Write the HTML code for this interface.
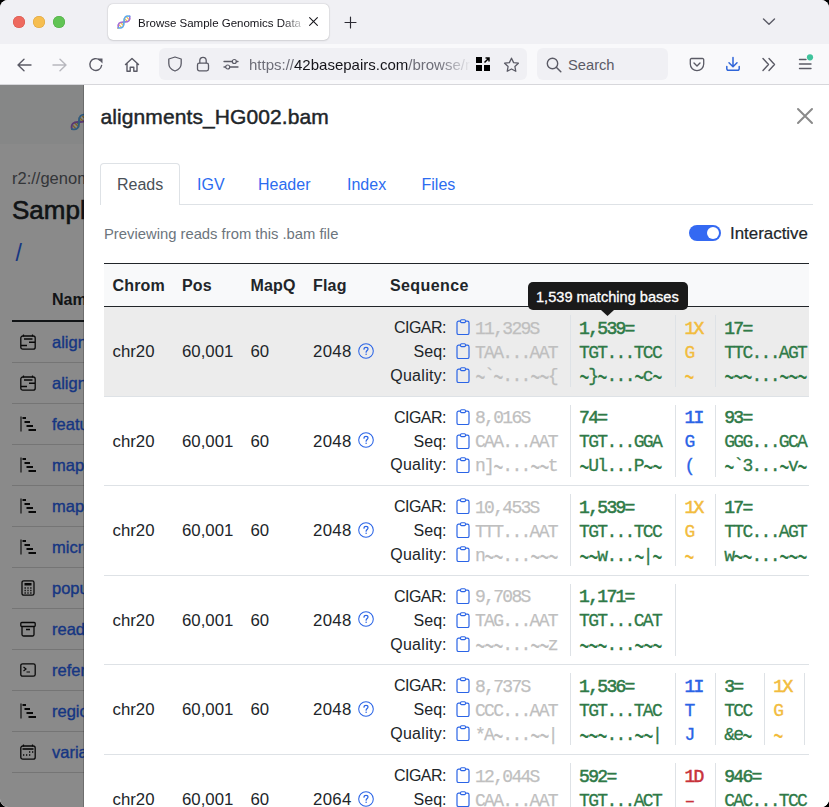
<!DOCTYPE html>
<html><head><meta charset="utf-8">
<style>
*{margin:0;padding:0;box-sizing:border-box}
html,body{width:829px;height:807px;overflow:hidden;background:#000}
body{position:relative;font-family:"Liberation Sans",sans-serif}
#win{position:absolute;left:0;top:0;width:829px;height:807px;border-radius:8px;overflow:hidden;background:#fff}
.abs{position:absolute}
.t{position:absolute;white-space:nowrap}
svg{position:absolute;overflow:visible}
</style></head>
<body><div id="win">

<div class="abs" style="left:0;top:0;width:829px;height:44px;background:#f0f0f4"></div>
<div class="abs" style="left:13px;top:16px;width:12px;height:12px;border-radius:50%;background:#ee6a5f;box-shadow:inset 0 0 0 0.5px #d6544a"></div>
<div class="abs" style="left:33px;top:16px;width:12px;height:12px;border-radius:50%;background:#f6be50;box-shadow:inset 0 0 0 0.5px #dba23c"></div>
<div class="abs" style="left:53px;top:16px;width:12px;height:12px;border-radius:50%;background:#61c454;box-shadow:inset 0 0 0 0.5px #4ea943"></div>
<div class="abs" style="left:108px;top:4px;width:221px;height:36px;background:#fff;border-radius:5px;box-shadow:0 0 1.5px rgba(0,0,0,.28),0 1px 2px rgba(0,0,0,.08)"></div>
<svg style="left:116px;top:14px" width="16" height="16" viewBox="0 0 16 16"><g transform="rotate(-45 8 8)">
<path d="M-1.5 8 L1 8M2.5 6.2V9.8M5 5.3V10.7M10.8 5.3V10.7M13.3 6.2V9.8" stroke="#e8b84a" stroke-width="1.1"/>
<path d="M6.5 6.8V9.2M9.2 6.8V9.2" stroke="#8fc46a" stroke-width="1.1"/>
<path d="M0 8C2 4.5 5 4.5 8 8S14 11.5 16 8" stroke="#a46ad6" stroke-width="1.6" fill="none" stroke-linecap="round"/>
<path d="M0 8C2 11.5 5 11.5 8 8S14 4.5 16 8" stroke="#5ca8e8" stroke-width="1.6" fill="none" stroke-linecap="round"/>
</g></svg>
<div class="t" style="left:138px;top:16px;font-size:11.5px;line-height:14px;color:#15141a;width:170px;overflow:hidden;-webkit-mask-image:linear-gradient(to right,#000 145px,transparent 168px)">Browse Sample Genomics Data - 42basepairs</div>
<svg style="left:308.5px;top:17.3px" width="9" height="9" viewBox="0 0 9 9"><path d="M0.6 0.6L8.4 8.4M8.4 0.6L0.6 8.4" stroke="#15141a" stroke-width="1.05" stroke-linecap="round"/></svg>
<svg style="left:344px;top:16px" width="13" height="13" viewBox="0 0 13 13"><path d="M6.5 1V12M1 6.5H12" stroke="#2b2a33" stroke-width="1.15" stroke-linecap="round"/></svg>
<svg style="left:762px;top:17px" width="14" height="9" viewBox="0 0 14 9"><path d="M1.5 2L7 7.3L12.5 2" stroke="#5b5b66" stroke-width="1.4" fill="none" stroke-linecap="round" stroke-linejoin="round"/></svg>
<div class="abs" style="left:0;top:0;width:0;height:0"></div>
<div class="abs" style="left:0;top:44px;width:829px;height:40px;background:#f9f9fb"></div>
<div class="abs" style="left:0;top:84px;width:829px;height:1px;background:#d7d7db"></div>
<svg style="left:16px;top:57px" width="16" height="16" viewBox="0 0 16 16"><path d="M15 8H2.5M8 2.2L2 8L8 13.8" stroke="#5b5b66" stroke-width="1.4" fill="none" stroke-linecap="round" stroke-linejoin="round"/></svg>
<svg style="left:52px;top:57px" width="16" height="16" viewBox="0 0 16 16"><path d="M1 8H13.5M8 2.2L14 8L8 13.8" stroke="#b8b8be" stroke-width="1.4" fill="none" stroke-linecap="round" stroke-linejoin="round"/></svg>
<svg style="left:88px;top:57px" width="16" height="16" viewBox="0 0 16 16"><path d="M13.6 8.5A5.9 5.9 0 1 1 11.5 3" stroke="#5b5b66" stroke-width="1.4" fill="none" stroke-linecap="round"/><path d="M9.5 1.5L14.5 1.5L14.5 6.5Z" fill="#5b5b66"/></svg>
<svg style="left:124px;top:57px" width="16" height="16" viewBox="0 0 16 16"><path d="M1.5 7.5L8 1.5L14.5 7.5M3 6.5V14.2H6.2V10.2H9.8V14.2H13V6.5" stroke="#5b5b66" stroke-width="1.4" fill="none" stroke-linecap="round" stroke-linejoin="round"/></svg>
<div class="abs" style="left:159px;top:48px;width:368px;height:32px;background:#f0f0f4;border-radius:6px"></div>
<svg style="left:167px;top:56px" width="16" height="16" viewBox="0 0 16 16"><path d="M8 1L14.2 3V7.5C14.2 11 11.5 13.8 8 15C4.5 13.8 1.8 11 1.8 7.5V3Z" stroke="#5b5b66" stroke-width="1.3" fill="none" stroke-linejoin="round"/></svg>
<svg style="left:195px;top:56px" width="16" height="16" viewBox="0 0 16 16"><rect x="2.5" y="7.2" width="11" height="7.6" rx="1.8" stroke="#5b5b66" stroke-width="1.3" fill="none"/><path d="M4.8 7.2V4.5A3.2 3.2 0 0 1 11.2 4.5V7.2" stroke="#5b5b66" stroke-width="1.3" fill="none"/></svg>
<svg style="left:223px;top:56px" width="16" height="16" viewBox="0 0 16 16"><path d="M1 5.5H9M13.5 5.5H15M1 11H2.5M7 11H15" stroke="#5b5b66" stroke-width="1.3" fill="none" stroke-linecap="round"/><circle cx="11.3" cy="5.5" r="2" stroke="#5b5b66" stroke-width="1.2" fill="none"/><circle cx="4.7" cy="11" r="2" stroke="#5b5b66" stroke-width="1.2" fill="none"/></svg>
<div class="t" style="left:249px;top:56px;font-size:15px;line-height:18px;width:224px;overflow:hidden;-webkit-mask-image:linear-gradient(to right,#000 190px,transparent 222px)"><span style="color:#6e6e78">https://</span><span style="color:#15141a">42basepairs.com</span><span style="color:#6e6e78">/browse/r2://genomics</span></div>
<svg style="left:476px;top:57px" width="14" height="14" viewBox="0 0 14 14"><rect x="0" y="0" width="6" height="6" fill="#000"/><rect x="0" y="8" width="6" height="6" fill="#000"/><rect x="8" y="8" width="6" height="6" fill="#000"/><path d="M8.5 5.5L13 1M9.5 1H13V4.5" stroke="#000" stroke-width="1.5" fill="none"/></svg>
<svg style="left:503px;top:57px" width="17" height="16" viewBox="0 0 17 16"><path d="M8.5 1.2L10.6 5.6L15.4 6.2L11.9 9.5L12.8 14.3L8.5 12L4.2 14.3L5.1 9.5L1.6 6.2L6.4 5.6Z" stroke="#5b5b66" stroke-width="1.3" fill="none" stroke-linejoin="round"/></svg>
<div class="abs" style="left:537px;top:48px;width:131px;height:32px;background:#f0f0f4;border-radius:6px"></div>
<svg style="left:546px;top:57px" width="16" height="16" viewBox="0 0 16 16"><circle cx="6.5" cy="6.5" r="5.2" stroke="#5b5b66" stroke-width="1.4" fill="none"/><path d="M10.3 10.3L14.8 14.8" stroke="#5b5b66" stroke-width="1.5" stroke-linecap="round"/></svg>
<div class="t" style="left:568px;top:56px;font-size:14.7px;line-height:18px;color:#5b5b66">Search</div>
<svg style="left:689px;top:57px" width="16" height="15" viewBox="0 0 16 15"><path d="M2.5 1.5H13.5A1.2 1.2 0 0 1 14.7 2.7V7A6.7 6.7 0 0 1 1.3 7V2.7A1.2 1.2 0 0 1 2.5 1.5Z" stroke="#5b5b66" stroke-width="1.3" fill="none"/><path d="M5 6L8 9L11 6" stroke="#5b5b66" stroke-width="1.4" fill="none" stroke-linecap="round" stroke-linejoin="round"/></svg>
<svg style="left:725px;top:56px" width="16" height="16" viewBox="0 0 16 16"><path d="M8 1.5V10.5M4 6.8L8 10.8L12 6.8" stroke="#2f65d9" stroke-width="1.5" fill="none" stroke-linecap="round" stroke-linejoin="round"/><path d="M1.8 10.5V12.8A1.5 1.5 0 0 0 3.3 14.3H12.7A1.5 1.5 0 0 0 14.2 12.8V10.5" stroke="#2f65d9" stroke-width="1.5" fill="none" stroke-linecap="round"/></svg>
<svg style="left:761px;top:57px" width="16" height="15" viewBox="0 0 16 15"><path d="M2 1.5L7.5 7.5L2 13.5M8 1.5L13.5 7.5L8 13.5" stroke="#5b5b66" stroke-width="1.4" fill="none" stroke-linecap="round" stroke-linejoin="round"/></svg>
<svg style="left:798px;top:56px" width="16" height="16" viewBox="0 0 16 16"><path d="M1.5 3.5H8M1.5 8H13M1.5 12.5H13" stroke="#5b5b66" stroke-width="1.4" fill="none" stroke-linecap="round"/><circle cx="12" cy="1.3" r="3.1" fill="#3fc39c"/></svg>
<div class="abs" style="left:0;top:85px;width:84px;height:722px;background:#fff;overflow:hidden">
<div class="abs" style="left:0;top:0;width:84px;height:59px;background:#f8f9fa"></div>
<svg style="left:69px;top:27px" width="20" height="20" viewBox="0 0 16 16"><g transform="rotate(-45 8 8)">
<path d="M2.5 6.2V9.8M5 5.3V10.7M10.8 5.3V10.7M13.3 6.2V9.8" stroke="#e8b84a" stroke-width="1.1"/>
<path d="M6.5 6.8V9.2M9.2 6.8V9.2" stroke="#8fc46a" stroke-width="1.1"/>
<path d="M0 8C2 4.5 5 4.5 8 8S14 11.5 16 8" stroke="#a46ad6" stroke-width="1.5" fill="none" stroke-linecap="round"/>
<path d="M0 8C2 11.5 5 11.5 8 8S14 4.5 16 8" stroke="#5ca8e8" stroke-width="1.5" fill="none" stroke-linecap="round"/>
</g></svg>
</div>
<div class="t" style="left:12px;top:166.48px;font-size:16.5px;line-height:25px;color:#5f646a;font-weight:normal;font-family:'Liberation Sans',sans-serif;">r2://genomics</div>
<div class="t" style="left:12px;top:191.49px;font-size:26px;line-height:39px;color:#212529;font-weight:normal;font-family:'Liberation Sans',sans-serif;-webkit-text-stroke:0.6px #212529">Sample</div>
<div class="t" style="left:15.5px;top:235.53px;font-size:23px;line-height:34px;color:#2a64f0;font-weight:normal;font-family:'Liberation Sans',sans-serif;">/</div>
<div class="t" style="left:52px;top:288.46px;font-size:16px;line-height:24px;color:#212529;font-weight:bold;font-family:'Liberation Sans',sans-serif;">Name</div>
<div class="abs" style="left:12px;top:320px;width:72px;height:2px;background:#212529"></div>
<div class="t" style="left:52px;top:330.28px;font-size:16.5px;line-height:25px;color:#2a64f0;font-weight:normal;font-family:'Liberation Sans',sans-serif;-webkit-text-stroke:0.35px #2a64f0">alignments</div>
<div class="abs" style="left:12px;top:362.4px;width:72px;height:1px;background:#d9d9d9"></div>
<div class="t" style="left:52px;top:371.28px;font-size:16.5px;line-height:25px;color:#2a64f0;font-weight:normal;font-family:'Liberation Sans',sans-serif;-webkit-text-stroke:0.35px #2a64f0">alignments</div>
<div class="abs" style="left:12px;top:403.4px;width:72px;height:1px;background:#d9d9d9"></div>
<div class="t" style="left:52px;top:412.28px;font-size:16.5px;line-height:25px;color:#2a64f0;font-weight:normal;font-family:'Liberation Sans',sans-serif;-webkit-text-stroke:0.35px #2a64f0">features</div>
<div class="abs" style="left:12px;top:444.4px;width:72px;height:1px;background:#d9d9d9"></div>
<div class="t" style="left:52px;top:453.28px;font-size:16.5px;line-height:25px;color:#2a64f0;font-weight:normal;font-family:'Liberation Sans',sans-serif;-webkit-text-stroke:0.35px #2a64f0">mappability</div>
<div class="abs" style="left:12px;top:485.4px;width:72px;height:1px;background:#d9d9d9"></div>
<div class="t" style="left:52px;top:494.28px;font-size:16.5px;line-height:25px;color:#2a64f0;font-weight:normal;font-family:'Liberation Sans',sans-serif;-webkit-text-stroke:0.35px #2a64f0">mappability</div>
<div class="abs" style="left:12px;top:526.4px;width:72px;height:1px;background:#d9d9d9"></div>
<div class="t" style="left:52px;top:535.28px;font-size:16.5px;line-height:25px;color:#2a64f0;font-weight:normal;font-family:'Liberation Sans',sans-serif;-webkit-text-stroke:0.35px #2a64f0">microarray</div>
<div class="abs" style="left:12px;top:567.4px;width:72px;height:1px;background:#d9d9d9"></div>
<div class="t" style="left:52px;top:576.28px;font-size:16.5px;line-height:25px;color:#2a64f0;font-weight:normal;font-family:'Liberation Sans',sans-serif;-webkit-text-stroke:0.35px #2a64f0">population</div>
<div class="abs" style="left:12px;top:608.4px;width:72px;height:1px;background:#d9d9d9"></div>
<div class="t" style="left:52px;top:617.28px;font-size:16.5px;line-height:25px;color:#2a64f0;font-weight:normal;font-family:'Liberation Sans',sans-serif;-webkit-text-stroke:0.35px #2a64f0">reads</div>
<div class="abs" style="left:12px;top:649.4px;width:72px;height:1px;background:#d9d9d9"></div>
<div class="t" style="left:52px;top:658.28px;font-size:16.5px;line-height:25px;color:#2a64f0;font-weight:normal;font-family:'Liberation Sans',sans-serif;-webkit-text-stroke:0.35px #2a64f0">reference</div>
<div class="abs" style="left:12px;top:690.4px;width:72px;height:1px;background:#d9d9d9"></div>
<div class="t" style="left:52px;top:699.28px;font-size:16.5px;line-height:25px;color:#2a64f0;font-weight:normal;font-family:'Liberation Sans',sans-serif;-webkit-text-stroke:0.35px #2a64f0">regions</div>
<div class="abs" style="left:12px;top:731.4px;width:72px;height:1px;background:#d9d9d9"></div>
<div class="t" style="left:52px;top:740.28px;font-size:16.5px;line-height:25px;color:#2a64f0;font-weight:normal;font-family:'Liberation Sans',sans-serif;-webkit-text-stroke:0.35px #2a64f0">variants</div>
<div class="abs" style="left:12px;top:772.4px;width:72px;height:1px;background:#d9d9d9"></div>
<svg style="left:20px;top:334px" width="16" height="16" viewBox="0 0 16 16"><rect x="0.8" y="2" width="14.4" height="13.2" rx="2" stroke="#111" stroke-width="1.3" fill="none"/><path d="M3.5 0.5V2.5M12.5 0.5V2.5" stroke="#111" stroke-width="1.2"/><path d="M4 5H12.5M9 8.2H15M1 11.5H7" stroke="#111" stroke-width="1.6"/></svg>
<svg style="left:20px;top:375px" width="16" height="16" viewBox="0 0 16 16"><rect x="0.8" y="2" width="14.4" height="13.2" rx="2" stroke="#111" stroke-width="1.3" fill="none"/><path d="M3.5 0.5V2.5M12.5 0.5V2.5" stroke="#111" stroke-width="1.2"/><path d="M4 5H12.5M9 8.2H15M1 11.5H7" stroke="#111" stroke-width="1.6"/></svg>
<svg style="left:20px;top:416px" width="16" height="16" viewBox="0 0 16 16"><path d="M1 0.5V15.5" stroke="#111" stroke-width="1.1"/><path d="M2.5 2H6M4.5 6H10M6.5 10H13M8.5 14H16" stroke="#111" stroke-width="1.9"/></svg>
<svg style="left:20px;top:457px" width="16" height="16" viewBox="0 0 16 16"><path d="M1 0.5V15.5" stroke="#111" stroke-width="1.1"/><path d="M2.5 2H6M4.5 6H10M6.5 10H13M8.5 14H16" stroke="#111" stroke-width="1.9"/></svg>
<svg style="left:20px;top:498px" width="16" height="16" viewBox="0 0 16 16"><path d="M1 0.5V15.5" stroke="#111" stroke-width="1.1"/><path d="M2.5 2H6M4.5 6H10M6.5 10H13M8.5 14H16" stroke="#111" stroke-width="1.9"/></svg>
<svg style="left:20px;top:539px" width="16" height="16" viewBox="0 0 16 16"><path d="M1 0.5V15.5" stroke="#111" stroke-width="1.1"/><path d="M2.5 2H6M4.5 6H10M6.5 10H13M8.5 14H16" stroke="#111" stroke-width="1.9"/></svg>
<svg style="left:21px;top:580px" width="14" height="16" viewBox="0 0 14 16"><rect x="1" y="0.8" width="12" height="14.4" rx="1.8" stroke="#111" stroke-width="1.3" fill="none"/><rect x="3.5" y="3" width="7" height="2.5" fill="#111"/><path d="M3.5 8H4.8M6.4 8H7.6M9.2 8H10.5M3.5 10.5H4.8M6.4 10.5H7.6M9.2 10.5H10.5M3.5 13H4.8M6.4 13H7.6M9.2 13H10.5" stroke="#111" stroke-width="1.5"/></svg>
<svg style="left:20px;top:621px" width="16" height="16" viewBox="0 0 16 16"><rect x="0.8" y="1.5" width="14.4" height="4" rx="1" stroke="#111" stroke-width="1.3" fill="none"/><path d="M2 5.5V13.5A1.5 1.5 0 0 0 3.5 15H12.5A1.5 1.5 0 0 0 14 13.5V5.5M6 8.5H10" stroke="#111" stroke-width="1.3" fill="none"/></svg>
<svg style="left:20px;top:662px" width="16" height="16" viewBox="0 0 16 16"><rect x="0.8" y="1.8" width="14.4" height="12.4" rx="1.8" stroke="#111" stroke-width="1.3" fill="none"/><path d="M3.5 5L6 7L3.5 9M6.5 10H10" stroke="#111" stroke-width="1.2" fill="none"/></svg>
<svg style="left:20px;top:703px" width="16" height="16" viewBox="0 0 16 16"><path d="M1 0.5V15.5" stroke="#111" stroke-width="1.1"/><path d="M2.5 2H6M4.5 6H10M6.5 10H13M8.5 14H16" stroke="#111" stroke-width="1.9"/></svg>
<svg style="left:20px;top:744px" width="16" height="16" viewBox="0 0 16 16"><rect x="0.8" y="2" width="14.4" height="13.2" rx="2" stroke="#111" stroke-width="1.3" fill="none"/><path d="M3.5 0.5V2.5M12.5 0.5V2.5" stroke="#111" stroke-width="1.2"/><path d="M2.5 5H13.5" stroke="#111" stroke-width="1.6"/><path d="M9 8H10.3M12 8H13.3M3 11H4.3M6 11H7.3M9 11H10.3" stroke="#111" stroke-width="1.5"/></svg>
<div class="abs" style="left:0;top:85px;width:84px;height:722px;background:rgba(0,0,0,.46)"></div>
<div class="abs" style="left:83px;top:85px;width:746px;height:722px;background:#fff;background-clip:padding-box;border-left:1px solid rgba(0,0,0,.2)"></div>
<div class="t" style="left:100.5px;top:101.12px;font-size:21px;line-height:32px;color:#212529;font-weight:normal;font-family:'Liberation Sans',sans-serif;-webkit-text-stroke:0.45px #212529;letter-spacing:0.1px">alignments_HG002.bam</div>
<svg style="left:797px;top:108px" width="16" height="16" viewBox="0 0 16 16"><path d="M1 1L15 15M15 1L1 15" stroke="#8a8a8a" stroke-width="2" stroke-linecap="round"/></svg>
<div class="abs" style="left:100px;top:204px;width:713px;height:1px;background:#dee2e6"></div>
<div class="abs" style="left:100px;top:163px;width:80px;height:42px;background:#fff;border:1px solid #dee2e6;border-bottom:none;border-radius:4px 4px 0 0"></div>
<div class="t" style="left:117px;top:173.46px;font-size:16px;line-height:24px;color:#495057;font-weight:normal;font-family:'Liberation Sans',sans-serif;">Reads</div>
<div class="t" style="left:197px;top:173.46px;font-size:16px;line-height:24px;color:#2c6cf0;font-weight:normal;font-family:'Liberation Sans',sans-serif;">IGV</div>
<div class="t" style="left:258px;top:173.46px;font-size:16px;line-height:24px;color:#2c6cf0;font-weight:normal;font-family:'Liberation Sans',sans-serif;">Header</div>
<div class="t" style="left:347px;top:173.46px;font-size:16px;line-height:24px;color:#2c6cf0;font-weight:normal;font-family:'Liberation Sans',sans-serif;">Index</div>
<div class="t" style="left:421.5px;top:173.46px;font-size:16px;line-height:24px;color:#2c6cf0;font-weight:normal;font-family:'Liberation Sans',sans-serif;">Files</div>
<div class="t" style="left:104px;top:223.37px;font-size:14.8px;line-height:22px;color:#6c757d;font-weight:normal;font-family:'Liberation Sans',sans-serif;">Previewing reads from this .bam file</div>
<div class="abs" style="left:689px;top:225px;width:32px;height:16px;border-radius:8px;background:#3469f2"></div>
<div class="abs" style="left:707px;top:227px;width:12px;height:12px;border-radius:50%;background:#fff"></div>
<div class="t" style="left:730px;top:220.64px;font-size:16.9px;line-height:25px;color:#212529;font-weight:normal;font-family:'Liberation Sans',sans-serif;-webkit-text-stroke:0.2px #212529">Interactive</div>
<div class="abs" style="left:104px;top:263px;width:705px;height:1px;background:#212529"></div>
<div class="abs" style="left:104px;top:264px;width:705px;height:42px;background:#f8f9fa"></div>
<div class="abs" style="left:104px;top:306px;width:705px;height:1px;background:#212529"></div>
<div class="t" style="left:112.5px;top:273.66px;font-size:16px;line-height:24px;color:#212529;font-weight:bold;font-family:'Liberation Sans',sans-serif;letter-spacing:0.15px">Chrom</div>
<div class="t" style="left:182px;top:273.66px;font-size:16px;line-height:24px;color:#212529;font-weight:bold;font-family:'Liberation Sans',sans-serif;letter-spacing:0.1px">Pos</div>
<div class="t" style="left:250.5px;top:273.66px;font-size:16px;line-height:24px;color:#212529;font-weight:bold;font-family:'Liberation Sans',sans-serif;letter-spacing:0.15px">MapQ</div>
<div class="t" style="left:313px;top:273.66px;font-size:16px;line-height:24px;color:#212529;font-weight:bold;font-family:'Liberation Sans',sans-serif;letter-spacing:0.2px">Flag</div>
<div class="t" style="left:390px;top:273.66px;font-size:16px;line-height:24px;color:#212529;font-weight:bold;font-family:'Liberation Sans',sans-serif;letter-spacing:0.4px">Sequence</div>
<div class="abs" style="left:104px;top:307px;width:705px;height:89px;background:#ececec"></div>
<div class="abs" style="left:104px;top:396px;width:705px;height:1px;background:#dee2e6"></div>
<div class="t" style="left:112.5px;top:339.08px;font-size:16.8px;line-height:25px;color:#212529;font-weight:normal;font-family:'Liberation Sans',sans-serif;">chr20</div>
<div class="t" style="left:182px;top:339.08px;font-size:16.8px;line-height:25px;color:#212529;font-weight:normal;font-family:'Liberation Sans',sans-serif;">60,001</div>
<div class="t" style="left:250.5px;top:339.08px;font-size:16.8px;line-height:25px;color:#212529;font-weight:normal;font-family:'Liberation Sans',sans-serif;">60</div>
<div class="t" style="left:313px;top:339.08px;font-size:16.8px;line-height:25px;color:#212529;font-weight:normal;font-family:'Liberation Sans',sans-serif;letter-spacing:0.3px">2048</div>
<svg style="left:357.5px;top:342.6px" width="16" height="16" viewBox="0 0 16 16"><circle cx="8" cy="8" r="7.3" stroke="#2a64e6" stroke-width="1.05" fill="none"/><path d="M6 6.2C6 5 6.9 4.3 8 4.3C9.1 4.3 10 5 10 6C10 7.4 8.1 7.5 8.1 9.2" stroke="#2a64e6" stroke-width="1.2" fill="none" stroke-linecap="round"/><circle cx="8.1" cy="11.3" r="0.75" fill="#2a64e6"/></svg>
<div class="t" style="right:383.0px;top:315.96px;font-size:16px;line-height:24px;color:#212529;font-weight:normal;font-family:'Liberation Sans',sans-serif;text-align:right;letter-spacing:-0.5px">CIGAR:</div>
<div class="t" style="right:382.5px;top:339.96px;font-size:16px;line-height:24px;color:#212529;font-weight:normal;font-family:'Liberation Sans',sans-serif;text-align:right;letter-spacing:0px">Seq:</div>
<div class="t" style="right:382.2px;top:363.86px;font-size:16px;line-height:24px;color:#212529;font-weight:normal;font-family:'Liberation Sans',sans-serif;text-align:right;letter-spacing:0.3px">Quality:</div>
<svg style="left:456px;top:319.0px" width="14" height="16" viewBox="0 0 14 16"><path d="M4 2.2H2.6A1.6 1.6 0 0 0 1 3.8V13.9A1.6 1.6 0 0 0 2.6 15.5H11.4A1.6 1.6 0 0 0 13 13.9V3.8A1.6 1.6 0 0 0 11.4 2.2H10" stroke="#2a64e6" stroke-width="1.2" fill="none"/><rect x="4.5" y="0.8" width="5" height="2.8" rx="1" stroke="#2a64e6" stroke-width="1.1" fill="none"/></svg>
<svg style="left:456px;top:343.0px" width="14" height="16" viewBox="0 0 14 16"><path d="M4 2.2H2.6A1.6 1.6 0 0 0 1 3.8V13.9A1.6 1.6 0 0 0 2.6 15.5H11.4A1.6 1.6 0 0 0 13 13.9V3.8A1.6 1.6 0 0 0 11.4 2.2H10" stroke="#2a64e6" stroke-width="1.2" fill="none"/><rect x="4.5" y="0.8" width="5" height="2.8" rx="1" stroke="#2a64e6" stroke-width="1.1" fill="none"/></svg>
<svg style="left:456px;top:366.9px" width="14" height="16" viewBox="0 0 14 16"><path d="M4 2.2H2.6A1.6 1.6 0 0 0 1 3.8V13.9A1.6 1.6 0 0 0 2.6 15.5H11.4A1.6 1.6 0 0 0 13 13.9V3.8A1.6 1.6 0 0 0 11.4 2.2H10" stroke="#2a64e6" stroke-width="1.2" fill="none"/><rect x="4.5" y="0.8" width="5" height="2.8" rx="1" stroke="#2a64e6" stroke-width="1.1" fill="none"/></svg>
<div class="t" style="left:475px;top:315.50px;font-size:18px;line-height:27px;color:#bfbfbf;font-weight:normal;font-family:'Liberation Mono',monospace;letter-spacing:-1.7px;-webkit-text-stroke:0.25px #bfbfbf">11,329S</div>
<div class="t" style="left:475px;top:339.50px;font-size:18px;line-height:27px;color:#bfbfbf;font-weight:normal;font-family:'Liberation Mono',monospace;letter-spacing:-1.7px;-webkit-text-stroke:0.25px #bfbfbf">TAA...AAT</div>
<div class="t" style="left:475px;top:363.40px;font-size:18px;line-height:27px;color:#bfbfbf;font-weight:normal;font-family:'Liberation Mono',monospace;letter-spacing:-1.7px;-webkit-text-stroke:0.25px #bfbfbf"><span style="display:inline-block;-webkit-text-stroke:0;transform:translateY(3px) scale(0.95,1.8)">~</span>`<span style="display:inline-block;-webkit-text-stroke:0;transform:translateY(3px) scale(0.95,1.8)">~</span>...<span style="display:inline-block;-webkit-text-stroke:0;transform:translateY(3px) scale(0.95,1.8)">~</span><span style="display:inline-block;-webkit-text-stroke:0;transform:translateY(3px) scale(0.95,1.8)">~</span>{</div>
<div class="abs" style="left:569.8px;top:315.0px;width:1px;height:72px;background:#dee2e6"></div>
<div class="t" style="left:579.1px;top:315.50px;font-size:18px;line-height:27px;color:#2f7a47;font-weight:normal;font-family:'Liberation Mono',monospace;letter-spacing:-1.7px;-webkit-text-stroke:0.55px #2f7a47">1,539=</div>
<div class="t" style="left:579.1px;top:339.50px;font-size:18px;line-height:27px;color:#2f7a47;font-weight:normal;font-family:'Liberation Mono',monospace;letter-spacing:-1.7px;-webkit-text-stroke:0.3px #2f7a47">TGT...TCC</div>
<div class="t" style="left:579.1px;top:363.40px;font-size:18px;line-height:27px;color:#2f7a47;font-weight:normal;font-family:'Liberation Mono',monospace;letter-spacing:-1.7px;-webkit-text-stroke:0.3px #2f7a47"><span style="display:inline-block;-webkit-text-stroke:0;transform:translateY(3px) scale(0.95,1.8)">~</span>}<span style="display:inline-block;-webkit-text-stroke:0;transform:translateY(3px) scale(0.95,1.8)">~</span>...<span style="display:inline-block;-webkit-text-stroke:0;transform:translateY(3px) scale(0.95,1.8)">~</span>c<span style="display:inline-block;-webkit-text-stroke:0;transform:translateY(3px) scale(0.95,1.8)">~</span></div>
<div class="abs" style="left:675.1px;top:315.0px;width:1px;height:72px;background:#dee2e6"></div>
<div class="t" style="left:684.4px;top:315.50px;font-size:18px;line-height:27px;color:#f2bc3d;font-weight:normal;font-family:'Liberation Mono',monospace;letter-spacing:-1.7px;-webkit-text-stroke:0.55px #f2bc3d">1X</div>
<div class="t" style="left:684.4px;top:339.50px;font-size:18px;line-height:27px;color:#f2bc3d;font-weight:normal;font-family:'Liberation Mono',monospace;letter-spacing:-1.7px;-webkit-text-stroke:0.3px #f2bc3d">G</div>
<div class="t" style="left:684.4px;top:363.40px;font-size:18px;line-height:27px;color:#f2bc3d;font-weight:normal;font-family:'Liberation Mono',monospace;letter-spacing:-1.7px;-webkit-text-stroke:0.3px #f2bc3d"><span style="display:inline-block;-webkit-text-stroke:0;transform:translateY(3px) scale(0.95,1.8)">~</span></div>
<div class="abs" style="left:714.9px;top:315.0px;width:1px;height:72px;background:#dee2e6"></div>
<div class="t" style="left:724.2px;top:315.50px;font-size:18px;line-height:27px;color:#2f7a47;font-weight:normal;font-family:'Liberation Mono',monospace;letter-spacing:-1.7px;-webkit-text-stroke:0.55px #2f7a47">17=</div>
<div class="t" style="left:724.2px;top:339.50px;font-size:18px;line-height:27px;color:#2f7a47;font-weight:normal;font-family:'Liberation Mono',monospace;letter-spacing:-1.7px;-webkit-text-stroke:0.3px #2f7a47">TTC...AGT</div>
<div class="t" style="left:724.2px;top:363.40px;font-size:18px;line-height:27px;color:#2f7a47;font-weight:normal;font-family:'Liberation Mono',monospace;letter-spacing:-1.7px;-webkit-text-stroke:0.3px #2f7a47"><span style="display:inline-block;-webkit-text-stroke:0;transform:translateY(3px) scale(0.95,1.8)">~</span><span style="display:inline-block;-webkit-text-stroke:0;transform:translateY(3px) scale(0.95,1.8)">~</span><span style="display:inline-block;-webkit-text-stroke:0;transform:translateY(3px) scale(0.95,1.8)">~</span>...<span style="display:inline-block;-webkit-text-stroke:0;transform:translateY(3px) scale(0.95,1.8)">~</span><span style="display:inline-block;-webkit-text-stroke:0;transform:translateY(3px) scale(0.95,1.8)">~</span><span style="display:inline-block;-webkit-text-stroke:0;transform:translateY(3px) scale(0.95,1.8)">~</span></div>
<div class="abs" style="left:820.2px;top:315.0px;width:1px;height:72px;background:#dee2e6"></div>
<div class="abs" style="left:104px;top:485px;width:705px;height:1px;background:#dee2e6"></div>
<div class="t" style="left:112.5px;top:428.68px;font-size:16.8px;line-height:25px;color:#212529;font-weight:normal;font-family:'Liberation Sans',sans-serif;">chr20</div>
<div class="t" style="left:182px;top:428.68px;font-size:16.8px;line-height:25px;color:#212529;font-weight:normal;font-family:'Liberation Sans',sans-serif;">60,001</div>
<div class="t" style="left:250.5px;top:428.68px;font-size:16.8px;line-height:25px;color:#212529;font-weight:normal;font-family:'Liberation Sans',sans-serif;">60</div>
<div class="t" style="left:313px;top:428.68px;font-size:16.8px;line-height:25px;color:#212529;font-weight:normal;font-family:'Liberation Sans',sans-serif;letter-spacing:0.3px">2048</div>
<svg style="left:357.5px;top:432.2px" width="16" height="16" viewBox="0 0 16 16"><circle cx="8" cy="8" r="7.3" stroke="#2a64e6" stroke-width="1.05" fill="none"/><path d="M6 6.2C6 5 6.9 4.3 8 4.3C9.1 4.3 10 5 10 6C10 7.4 8.1 7.5 8.1 9.2" stroke="#2a64e6" stroke-width="1.2" fill="none" stroke-linecap="round"/><circle cx="8.1" cy="11.3" r="0.75" fill="#2a64e6"/></svg>
<div class="t" style="right:383.0px;top:405.56px;font-size:16px;line-height:24px;color:#212529;font-weight:normal;font-family:'Liberation Sans',sans-serif;text-align:right;letter-spacing:-0.5px">CIGAR:</div>
<div class="t" style="right:382.5px;top:429.56px;font-size:16px;line-height:24px;color:#212529;font-weight:normal;font-family:'Liberation Sans',sans-serif;text-align:right;letter-spacing:0px">Seq:</div>
<div class="t" style="right:382.2px;top:453.46px;font-size:16px;line-height:24px;color:#212529;font-weight:normal;font-family:'Liberation Sans',sans-serif;text-align:right;letter-spacing:0.3px">Quality:</div>
<svg style="left:456px;top:408.6px" width="14" height="16" viewBox="0 0 14 16"><path d="M4 2.2H2.6A1.6 1.6 0 0 0 1 3.8V13.9A1.6 1.6 0 0 0 2.6 15.5H11.4A1.6 1.6 0 0 0 13 13.9V3.8A1.6 1.6 0 0 0 11.4 2.2H10" stroke="#2a64e6" stroke-width="1.2" fill="none"/><rect x="4.5" y="0.8" width="5" height="2.8" rx="1" stroke="#2a64e6" stroke-width="1.1" fill="none"/></svg>
<svg style="left:456px;top:432.6px" width="14" height="16" viewBox="0 0 14 16"><path d="M4 2.2H2.6A1.6 1.6 0 0 0 1 3.8V13.9A1.6 1.6 0 0 0 2.6 15.5H11.4A1.6 1.6 0 0 0 13 13.9V3.8A1.6 1.6 0 0 0 11.4 2.2H10" stroke="#2a64e6" stroke-width="1.2" fill="none"/><rect x="4.5" y="0.8" width="5" height="2.8" rx="1" stroke="#2a64e6" stroke-width="1.1" fill="none"/></svg>
<svg style="left:456px;top:456.5px" width="14" height="16" viewBox="0 0 14 16"><path d="M4 2.2H2.6A1.6 1.6 0 0 0 1 3.8V13.9A1.6 1.6 0 0 0 2.6 15.5H11.4A1.6 1.6 0 0 0 13 13.9V3.8A1.6 1.6 0 0 0 11.4 2.2H10" stroke="#2a64e6" stroke-width="1.2" fill="none"/><rect x="4.5" y="0.8" width="5" height="2.8" rx="1" stroke="#2a64e6" stroke-width="1.1" fill="none"/></svg>
<div class="t" style="left:475px;top:405.10px;font-size:18px;line-height:27px;color:#bfbfbf;font-weight:normal;font-family:'Liberation Mono',monospace;letter-spacing:-1.7px;-webkit-text-stroke:0.25px #bfbfbf">8,016S</div>
<div class="t" style="left:475px;top:429.10px;font-size:18px;line-height:27px;color:#bfbfbf;font-weight:normal;font-family:'Liberation Mono',monospace;letter-spacing:-1.7px;-webkit-text-stroke:0.25px #bfbfbf">CAA...AAT</div>
<div class="t" style="left:475px;top:453.00px;font-size:18px;line-height:27px;color:#bfbfbf;font-weight:normal;font-family:'Liberation Mono',monospace;letter-spacing:-1.7px;-webkit-text-stroke:0.25px #bfbfbf">n]<span style="display:inline-block;-webkit-text-stroke:0;transform:translateY(3px) scale(0.95,1.8)">~</span>...<span style="display:inline-block;-webkit-text-stroke:0;transform:translateY(3px) scale(0.95,1.8)">~</span><span style="display:inline-block;-webkit-text-stroke:0;transform:translateY(3px) scale(0.95,1.8)">~</span>t</div>
<div class="abs" style="left:569.8px;top:404.6px;width:1px;height:72px;background:#dee2e6"></div>
<div class="t" style="left:579.1px;top:405.10px;font-size:18px;line-height:27px;color:#2f7a47;font-weight:normal;font-family:'Liberation Mono',monospace;letter-spacing:-1.7px;-webkit-text-stroke:0.55px #2f7a47">74=</div>
<div class="t" style="left:579.1px;top:429.10px;font-size:18px;line-height:27px;color:#2f7a47;font-weight:normal;font-family:'Liberation Mono',monospace;letter-spacing:-1.7px;-webkit-text-stroke:0.3px #2f7a47">TGT...GGA</div>
<div class="t" style="left:579.1px;top:453.00px;font-size:18px;line-height:27px;color:#2f7a47;font-weight:normal;font-family:'Liberation Mono',monospace;letter-spacing:-1.7px;-webkit-text-stroke:0.3px #2f7a47"><span style="display:inline-block;-webkit-text-stroke:0;transform:translateY(3px) scale(0.95,1.8)">~</span>Ul...P<span style="display:inline-block;-webkit-text-stroke:0;transform:translateY(3px) scale(0.95,1.8)">~</span><span style="display:inline-block;-webkit-text-stroke:0;transform:translateY(3px) scale(0.95,1.8)">~</span></div>
<div class="abs" style="left:675.1px;top:404.6px;width:1px;height:72px;background:#dee2e6"></div>
<div class="t" style="left:684.4px;top:405.10px;font-size:18px;line-height:27px;color:#2a64e6;font-weight:normal;font-family:'Liberation Mono',monospace;letter-spacing:-1.7px;-webkit-text-stroke:0.55px #2a64e6">1I</div>
<div class="t" style="left:684.4px;top:429.10px;font-size:18px;line-height:27px;color:#2a64e6;font-weight:normal;font-family:'Liberation Mono',monospace;letter-spacing:-1.7px;-webkit-text-stroke:0.3px #2a64e6">G</div>
<div class="t" style="left:684.4px;top:453.00px;font-size:18px;line-height:27px;color:#2a64e6;font-weight:normal;font-family:'Liberation Mono',monospace;letter-spacing:-1.7px;-webkit-text-stroke:0.3px #2a64e6">(</div>
<div class="abs" style="left:714.9px;top:404.6px;width:1px;height:72px;background:#dee2e6"></div>
<div class="t" style="left:724.2px;top:405.10px;font-size:18px;line-height:27px;color:#2f7a47;font-weight:normal;font-family:'Liberation Mono',monospace;letter-spacing:-1.7px;-webkit-text-stroke:0.55px #2f7a47">93=</div>
<div class="t" style="left:724.2px;top:429.10px;font-size:18px;line-height:27px;color:#2f7a47;font-weight:normal;font-family:'Liberation Mono',monospace;letter-spacing:-1.7px;-webkit-text-stroke:0.3px #2f7a47">GGG...GCA</div>
<div class="t" style="left:724.2px;top:453.00px;font-size:18px;line-height:27px;color:#2f7a47;font-weight:normal;font-family:'Liberation Mono',monospace;letter-spacing:-1.7px;-webkit-text-stroke:0.3px #2f7a47"><span style="display:inline-block;-webkit-text-stroke:0;transform:translateY(3px) scale(0.95,1.8)">~</span>`3...<span style="display:inline-block;-webkit-text-stroke:0;transform:translateY(3px) scale(0.95,1.8)">~</span>v<span style="display:inline-block;-webkit-text-stroke:0;transform:translateY(3px) scale(0.95,1.8)">~</span></div>
<div class="abs" style="left:820.2px;top:404.6px;width:1px;height:72px;background:#dee2e6"></div>
<div class="abs" style="left:104px;top:575px;width:705px;height:1px;background:#dee2e6"></div>
<div class="t" style="left:112.5px;top:518.28px;font-size:16.8px;line-height:25px;color:#212529;font-weight:normal;font-family:'Liberation Sans',sans-serif;">chr20</div>
<div class="t" style="left:182px;top:518.28px;font-size:16.8px;line-height:25px;color:#212529;font-weight:normal;font-family:'Liberation Sans',sans-serif;">60,001</div>
<div class="t" style="left:250.5px;top:518.28px;font-size:16.8px;line-height:25px;color:#212529;font-weight:normal;font-family:'Liberation Sans',sans-serif;">60</div>
<div class="t" style="left:313px;top:518.28px;font-size:16.8px;line-height:25px;color:#212529;font-weight:normal;font-family:'Liberation Sans',sans-serif;letter-spacing:0.3px">2048</div>
<svg style="left:357.5px;top:521.8px" width="16" height="16" viewBox="0 0 16 16"><circle cx="8" cy="8" r="7.3" stroke="#2a64e6" stroke-width="1.05" fill="none"/><path d="M6 6.2C6 5 6.9 4.3 8 4.3C9.1 4.3 10 5 10 6C10 7.4 8.1 7.5 8.1 9.2" stroke="#2a64e6" stroke-width="1.2" fill="none" stroke-linecap="round"/><circle cx="8.1" cy="11.3" r="0.75" fill="#2a64e6"/></svg>
<div class="t" style="right:383.0px;top:495.16px;font-size:16px;line-height:24px;color:#212529;font-weight:normal;font-family:'Liberation Sans',sans-serif;text-align:right;letter-spacing:-0.5px">CIGAR:</div>
<div class="t" style="right:382.5px;top:519.16px;font-size:16px;line-height:24px;color:#212529;font-weight:normal;font-family:'Liberation Sans',sans-serif;text-align:right;letter-spacing:0px">Seq:</div>
<div class="t" style="right:382.2px;top:543.06px;font-size:16px;line-height:24px;color:#212529;font-weight:normal;font-family:'Liberation Sans',sans-serif;text-align:right;letter-spacing:0.3px">Quality:</div>
<svg style="left:456px;top:498.2px" width="14" height="16" viewBox="0 0 14 16"><path d="M4 2.2H2.6A1.6 1.6 0 0 0 1 3.8V13.9A1.6 1.6 0 0 0 2.6 15.5H11.4A1.6 1.6 0 0 0 13 13.9V3.8A1.6 1.6 0 0 0 11.4 2.2H10" stroke="#2a64e6" stroke-width="1.2" fill="none"/><rect x="4.5" y="0.8" width="5" height="2.8" rx="1" stroke="#2a64e6" stroke-width="1.1" fill="none"/></svg>
<svg style="left:456px;top:522.2px" width="14" height="16" viewBox="0 0 14 16"><path d="M4 2.2H2.6A1.6 1.6 0 0 0 1 3.8V13.9A1.6 1.6 0 0 0 2.6 15.5H11.4A1.6 1.6 0 0 0 13 13.9V3.8A1.6 1.6 0 0 0 11.4 2.2H10" stroke="#2a64e6" stroke-width="1.2" fill="none"/><rect x="4.5" y="0.8" width="5" height="2.8" rx="1" stroke="#2a64e6" stroke-width="1.1" fill="none"/></svg>
<svg style="left:456px;top:546.1px" width="14" height="16" viewBox="0 0 14 16"><path d="M4 2.2H2.6A1.6 1.6 0 0 0 1 3.8V13.9A1.6 1.6 0 0 0 2.6 15.5H11.4A1.6 1.6 0 0 0 13 13.9V3.8A1.6 1.6 0 0 0 11.4 2.2H10" stroke="#2a64e6" stroke-width="1.2" fill="none"/><rect x="4.5" y="0.8" width="5" height="2.8" rx="1" stroke="#2a64e6" stroke-width="1.1" fill="none"/></svg>
<div class="t" style="left:475px;top:494.70px;font-size:18px;line-height:27px;color:#bfbfbf;font-weight:normal;font-family:'Liberation Mono',monospace;letter-spacing:-1.7px;-webkit-text-stroke:0.25px #bfbfbf">10,453S</div>
<div class="t" style="left:475px;top:518.70px;font-size:18px;line-height:27px;color:#bfbfbf;font-weight:normal;font-family:'Liberation Mono',monospace;letter-spacing:-1.7px;-webkit-text-stroke:0.25px #bfbfbf">TTT...AAT</div>
<div class="t" style="left:475px;top:542.60px;font-size:18px;line-height:27px;color:#bfbfbf;font-weight:normal;font-family:'Liberation Mono',monospace;letter-spacing:-1.7px;-webkit-text-stroke:0.25px #bfbfbf">n<span style="display:inline-block;-webkit-text-stroke:0;transform:translateY(3px) scale(0.95,1.8)">~</span><span style="display:inline-block;-webkit-text-stroke:0;transform:translateY(3px) scale(0.95,1.8)">~</span>...<span style="display:inline-block;-webkit-text-stroke:0;transform:translateY(3px) scale(0.95,1.8)">~</span><span style="display:inline-block;-webkit-text-stroke:0;transform:translateY(3px) scale(0.95,1.8)">~</span><span style="display:inline-block;-webkit-text-stroke:0;transform:translateY(3px) scale(0.95,1.8)">~</span></div>
<div class="abs" style="left:569.8px;top:494.2px;width:1px;height:72px;background:#dee2e6"></div>
<div class="t" style="left:579.1px;top:494.70px;font-size:18px;line-height:27px;color:#2f7a47;font-weight:normal;font-family:'Liberation Mono',monospace;letter-spacing:-1.7px;-webkit-text-stroke:0.55px #2f7a47">1,539=</div>
<div class="t" style="left:579.1px;top:518.70px;font-size:18px;line-height:27px;color:#2f7a47;font-weight:normal;font-family:'Liberation Mono',monospace;letter-spacing:-1.7px;-webkit-text-stroke:0.3px #2f7a47">TGT...TCC</div>
<div class="t" style="left:579.1px;top:542.60px;font-size:18px;line-height:27px;color:#2f7a47;font-weight:normal;font-family:'Liberation Mono',monospace;letter-spacing:-1.7px;-webkit-text-stroke:0.3px #2f7a47"><span style="display:inline-block;-webkit-text-stroke:0;transform:translateY(3px) scale(0.95,1.8)">~</span><span style="display:inline-block;-webkit-text-stroke:0;transform:translateY(3px) scale(0.95,1.8)">~</span>w...<span style="display:inline-block;-webkit-text-stroke:0;transform:translateY(3px) scale(0.95,1.8)">~</span>|<span style="display:inline-block;-webkit-text-stroke:0;transform:translateY(3px) scale(0.95,1.8)">~</span></div>
<div class="abs" style="left:675.1px;top:494.2px;width:1px;height:72px;background:#dee2e6"></div>
<div class="t" style="left:684.4px;top:494.70px;font-size:18px;line-height:27px;color:#f2bc3d;font-weight:normal;font-family:'Liberation Mono',monospace;letter-spacing:-1.7px;-webkit-text-stroke:0.55px #f2bc3d">1X</div>
<div class="t" style="left:684.4px;top:518.70px;font-size:18px;line-height:27px;color:#f2bc3d;font-weight:normal;font-family:'Liberation Mono',monospace;letter-spacing:-1.7px;-webkit-text-stroke:0.3px #f2bc3d">G</div>
<div class="t" style="left:684.4px;top:542.60px;font-size:18px;line-height:27px;color:#f2bc3d;font-weight:normal;font-family:'Liberation Mono',monospace;letter-spacing:-1.7px;-webkit-text-stroke:0.3px #f2bc3d"><span style="display:inline-block;-webkit-text-stroke:0;transform:translateY(3px) scale(0.95,1.8)">~</span></div>
<div class="abs" style="left:714.9px;top:494.2px;width:1px;height:72px;background:#dee2e6"></div>
<div class="t" style="left:724.2px;top:494.70px;font-size:18px;line-height:27px;color:#2f7a47;font-weight:normal;font-family:'Liberation Mono',monospace;letter-spacing:-1.7px;-webkit-text-stroke:0.55px #2f7a47">17=</div>
<div class="t" style="left:724.2px;top:518.70px;font-size:18px;line-height:27px;color:#2f7a47;font-weight:normal;font-family:'Liberation Mono',monospace;letter-spacing:-1.7px;-webkit-text-stroke:0.3px #2f7a47">TTC...AGT</div>
<div class="t" style="left:724.2px;top:542.60px;font-size:18px;line-height:27px;color:#2f7a47;font-weight:normal;font-family:'Liberation Mono',monospace;letter-spacing:-1.7px;-webkit-text-stroke:0.3px #2f7a47">w<span style="display:inline-block;-webkit-text-stroke:0;transform:translateY(3px) scale(0.95,1.8)">~</span><span style="display:inline-block;-webkit-text-stroke:0;transform:translateY(3px) scale(0.95,1.8)">~</span>...<span style="display:inline-block;-webkit-text-stroke:0;transform:translateY(3px) scale(0.95,1.8)">~</span><span style="display:inline-block;-webkit-text-stroke:0;transform:translateY(3px) scale(0.95,1.8)">~</span><span style="display:inline-block;-webkit-text-stroke:0;transform:translateY(3px) scale(0.95,1.8)">~</span></div>
<div class="abs" style="left:820.2px;top:494.2px;width:1px;height:72px;background:#dee2e6"></div>
<div class="abs" style="left:104px;top:664px;width:705px;height:1px;background:#dee2e6"></div>
<div class="t" style="left:112.5px;top:607.88px;font-size:16.8px;line-height:25px;color:#212529;font-weight:normal;font-family:'Liberation Sans',sans-serif;">chr20</div>
<div class="t" style="left:182px;top:607.88px;font-size:16.8px;line-height:25px;color:#212529;font-weight:normal;font-family:'Liberation Sans',sans-serif;">60,001</div>
<div class="t" style="left:250.5px;top:607.88px;font-size:16.8px;line-height:25px;color:#212529;font-weight:normal;font-family:'Liberation Sans',sans-serif;">60</div>
<div class="t" style="left:313px;top:607.88px;font-size:16.8px;line-height:25px;color:#212529;font-weight:normal;font-family:'Liberation Sans',sans-serif;letter-spacing:0.3px">2048</div>
<svg style="left:357.5px;top:611.4px" width="16" height="16" viewBox="0 0 16 16"><circle cx="8" cy="8" r="7.3" stroke="#2a64e6" stroke-width="1.05" fill="none"/><path d="M6 6.2C6 5 6.9 4.3 8 4.3C9.1 4.3 10 5 10 6C10 7.4 8.1 7.5 8.1 9.2" stroke="#2a64e6" stroke-width="1.2" fill="none" stroke-linecap="round"/><circle cx="8.1" cy="11.3" r="0.75" fill="#2a64e6"/></svg>
<div class="t" style="right:383.0px;top:584.76px;font-size:16px;line-height:24px;color:#212529;font-weight:normal;font-family:'Liberation Sans',sans-serif;text-align:right;letter-spacing:-0.5px">CIGAR:</div>
<div class="t" style="right:382.5px;top:608.76px;font-size:16px;line-height:24px;color:#212529;font-weight:normal;font-family:'Liberation Sans',sans-serif;text-align:right;letter-spacing:0px">Seq:</div>
<div class="t" style="right:382.2px;top:632.66px;font-size:16px;line-height:24px;color:#212529;font-weight:normal;font-family:'Liberation Sans',sans-serif;text-align:right;letter-spacing:0.3px">Quality:</div>
<svg style="left:456px;top:587.8px" width="14" height="16" viewBox="0 0 14 16"><path d="M4 2.2H2.6A1.6 1.6 0 0 0 1 3.8V13.9A1.6 1.6 0 0 0 2.6 15.5H11.4A1.6 1.6 0 0 0 13 13.9V3.8A1.6 1.6 0 0 0 11.4 2.2H10" stroke="#2a64e6" stroke-width="1.2" fill="none"/><rect x="4.5" y="0.8" width="5" height="2.8" rx="1" stroke="#2a64e6" stroke-width="1.1" fill="none"/></svg>
<svg style="left:456px;top:611.8px" width="14" height="16" viewBox="0 0 14 16"><path d="M4 2.2H2.6A1.6 1.6 0 0 0 1 3.8V13.9A1.6 1.6 0 0 0 2.6 15.5H11.4A1.6 1.6 0 0 0 13 13.9V3.8A1.6 1.6 0 0 0 11.4 2.2H10" stroke="#2a64e6" stroke-width="1.2" fill="none"/><rect x="4.5" y="0.8" width="5" height="2.8" rx="1" stroke="#2a64e6" stroke-width="1.1" fill="none"/></svg>
<svg style="left:456px;top:635.7px" width="14" height="16" viewBox="0 0 14 16"><path d="M4 2.2H2.6A1.6 1.6 0 0 0 1 3.8V13.9A1.6 1.6 0 0 0 2.6 15.5H11.4A1.6 1.6 0 0 0 13 13.9V3.8A1.6 1.6 0 0 0 11.4 2.2H10" stroke="#2a64e6" stroke-width="1.2" fill="none"/><rect x="4.5" y="0.8" width="5" height="2.8" rx="1" stroke="#2a64e6" stroke-width="1.1" fill="none"/></svg>
<div class="t" style="left:475px;top:584.30px;font-size:18px;line-height:27px;color:#bfbfbf;font-weight:normal;font-family:'Liberation Mono',monospace;letter-spacing:-1.7px;-webkit-text-stroke:0.25px #bfbfbf">9,708S</div>
<div class="t" style="left:475px;top:608.30px;font-size:18px;line-height:27px;color:#bfbfbf;font-weight:normal;font-family:'Liberation Mono',monospace;letter-spacing:-1.7px;-webkit-text-stroke:0.25px #bfbfbf">TAG...AAT</div>
<div class="t" style="left:475px;top:632.20px;font-size:18px;line-height:27px;color:#bfbfbf;font-weight:normal;font-family:'Liberation Mono',monospace;letter-spacing:-1.7px;-webkit-text-stroke:0.25px #bfbfbf"><span style="display:inline-block;-webkit-text-stroke:0;transform:translateY(3px) scale(0.95,1.8)">~</span><span style="display:inline-block;-webkit-text-stroke:0;transform:translateY(3px) scale(0.95,1.8)">~</span><span style="display:inline-block;-webkit-text-stroke:0;transform:translateY(3px) scale(0.95,1.8)">~</span>...<span style="display:inline-block;-webkit-text-stroke:0;transform:translateY(3px) scale(0.95,1.8)">~</span><span style="display:inline-block;-webkit-text-stroke:0;transform:translateY(3px) scale(0.95,1.8)">~</span>z</div>
<div class="abs" style="left:569.8px;top:583.8px;width:1px;height:72px;background:#dee2e6"></div>
<div class="t" style="left:579.1px;top:584.30px;font-size:18px;line-height:27px;color:#2f7a47;font-weight:normal;font-family:'Liberation Mono',monospace;letter-spacing:-1.7px;-webkit-text-stroke:0.55px #2f7a47">1,171=</div>
<div class="t" style="left:579.1px;top:608.30px;font-size:18px;line-height:27px;color:#2f7a47;font-weight:normal;font-family:'Liberation Mono',monospace;letter-spacing:-1.7px;-webkit-text-stroke:0.3px #2f7a47">TGT...CAT</div>
<div class="t" style="left:579.1px;top:632.20px;font-size:18px;line-height:27px;color:#2f7a47;font-weight:normal;font-family:'Liberation Mono',monospace;letter-spacing:-1.7px;-webkit-text-stroke:0.3px #2f7a47"><span style="display:inline-block;-webkit-text-stroke:0;transform:translateY(3px) scale(0.95,1.8)">~</span><span style="display:inline-block;-webkit-text-stroke:0;transform:translateY(3px) scale(0.95,1.8)">~</span><span style="display:inline-block;-webkit-text-stroke:0;transform:translateY(3px) scale(0.95,1.8)">~</span>...<span style="display:inline-block;-webkit-text-stroke:0;transform:translateY(3px) scale(0.95,1.8)">~</span><span style="display:inline-block;-webkit-text-stroke:0;transform:translateY(3px) scale(0.95,1.8)">~</span><span style="display:inline-block;-webkit-text-stroke:0;transform:translateY(3px) scale(0.95,1.8)">~</span></div>
<div class="abs" style="left:675.1px;top:583.8px;width:1px;height:72px;background:#dee2e6"></div>
<div class="abs" style="left:104px;top:754px;width:705px;height:1px;background:#dee2e6"></div>
<div class="t" style="left:112.5px;top:697.48px;font-size:16.8px;line-height:25px;color:#212529;font-weight:normal;font-family:'Liberation Sans',sans-serif;">chr20</div>
<div class="t" style="left:182px;top:697.48px;font-size:16.8px;line-height:25px;color:#212529;font-weight:normal;font-family:'Liberation Sans',sans-serif;">60,001</div>
<div class="t" style="left:250.5px;top:697.48px;font-size:16.8px;line-height:25px;color:#212529;font-weight:normal;font-family:'Liberation Sans',sans-serif;">60</div>
<div class="t" style="left:313px;top:697.48px;font-size:16.8px;line-height:25px;color:#212529;font-weight:normal;font-family:'Liberation Sans',sans-serif;letter-spacing:0.3px">2048</div>
<svg style="left:357.5px;top:701.0px" width="16" height="16" viewBox="0 0 16 16"><circle cx="8" cy="8" r="7.3" stroke="#2a64e6" stroke-width="1.05" fill="none"/><path d="M6 6.2C6 5 6.9 4.3 8 4.3C9.1 4.3 10 5 10 6C10 7.4 8.1 7.5 8.1 9.2" stroke="#2a64e6" stroke-width="1.2" fill="none" stroke-linecap="round"/><circle cx="8.1" cy="11.3" r="0.75" fill="#2a64e6"/></svg>
<div class="t" style="right:383.0px;top:674.36px;font-size:16px;line-height:24px;color:#212529;font-weight:normal;font-family:'Liberation Sans',sans-serif;text-align:right;letter-spacing:-0.5px">CIGAR:</div>
<div class="t" style="right:382.5px;top:698.36px;font-size:16px;line-height:24px;color:#212529;font-weight:normal;font-family:'Liberation Sans',sans-serif;text-align:right;letter-spacing:0px">Seq:</div>
<div class="t" style="right:382.2px;top:722.26px;font-size:16px;line-height:24px;color:#212529;font-weight:normal;font-family:'Liberation Sans',sans-serif;text-align:right;letter-spacing:0.3px">Quality:</div>
<svg style="left:456px;top:677.4px" width="14" height="16" viewBox="0 0 14 16"><path d="M4 2.2H2.6A1.6 1.6 0 0 0 1 3.8V13.9A1.6 1.6 0 0 0 2.6 15.5H11.4A1.6 1.6 0 0 0 13 13.9V3.8A1.6 1.6 0 0 0 11.4 2.2H10" stroke="#2a64e6" stroke-width="1.2" fill="none"/><rect x="4.5" y="0.8" width="5" height="2.8" rx="1" stroke="#2a64e6" stroke-width="1.1" fill="none"/></svg>
<svg style="left:456px;top:701.4px" width="14" height="16" viewBox="0 0 14 16"><path d="M4 2.2H2.6A1.6 1.6 0 0 0 1 3.8V13.9A1.6 1.6 0 0 0 2.6 15.5H11.4A1.6 1.6 0 0 0 13 13.9V3.8A1.6 1.6 0 0 0 11.4 2.2H10" stroke="#2a64e6" stroke-width="1.2" fill="none"/><rect x="4.5" y="0.8" width="5" height="2.8" rx="1" stroke="#2a64e6" stroke-width="1.1" fill="none"/></svg>
<svg style="left:456px;top:725.3px" width="14" height="16" viewBox="0 0 14 16"><path d="M4 2.2H2.6A1.6 1.6 0 0 0 1 3.8V13.9A1.6 1.6 0 0 0 2.6 15.5H11.4A1.6 1.6 0 0 0 13 13.9V3.8A1.6 1.6 0 0 0 11.4 2.2H10" stroke="#2a64e6" stroke-width="1.2" fill="none"/><rect x="4.5" y="0.8" width="5" height="2.8" rx="1" stroke="#2a64e6" stroke-width="1.1" fill="none"/></svg>
<div class="t" style="left:475px;top:673.90px;font-size:18px;line-height:27px;color:#bfbfbf;font-weight:normal;font-family:'Liberation Mono',monospace;letter-spacing:-1.7px;-webkit-text-stroke:0.25px #bfbfbf">8,737S</div>
<div class="t" style="left:475px;top:697.90px;font-size:18px;line-height:27px;color:#bfbfbf;font-weight:normal;font-family:'Liberation Mono',monospace;letter-spacing:-1.7px;-webkit-text-stroke:0.25px #bfbfbf">CCC...AAT</div>
<div class="t" style="left:475px;top:721.80px;font-size:18px;line-height:27px;color:#bfbfbf;font-weight:normal;font-family:'Liberation Mono',monospace;letter-spacing:-1.7px;-webkit-text-stroke:0.25px #bfbfbf">*A<span style="display:inline-block;-webkit-text-stroke:0;transform:translateY(3px) scale(0.95,1.8)">~</span>...<span style="display:inline-block;-webkit-text-stroke:0;transform:translateY(3px) scale(0.95,1.8)">~</span><span style="display:inline-block;-webkit-text-stroke:0;transform:translateY(3px) scale(0.95,1.8)">~</span>|</div>
<div class="abs" style="left:569.8px;top:673.4px;width:1px;height:72px;background:#dee2e6"></div>
<div class="t" style="left:579.1px;top:673.90px;font-size:18px;line-height:27px;color:#2f7a47;font-weight:normal;font-family:'Liberation Mono',monospace;letter-spacing:-1.7px;-webkit-text-stroke:0.55px #2f7a47">1,536=</div>
<div class="t" style="left:579.1px;top:697.90px;font-size:18px;line-height:27px;color:#2f7a47;font-weight:normal;font-family:'Liberation Mono',monospace;letter-spacing:-1.7px;-webkit-text-stroke:0.3px #2f7a47">TGT...TAC</div>
<div class="t" style="left:579.1px;top:721.80px;font-size:18px;line-height:27px;color:#2f7a47;font-weight:normal;font-family:'Liberation Mono',monospace;letter-spacing:-1.7px;-webkit-text-stroke:0.3px #2f7a47"><span style="display:inline-block;-webkit-text-stroke:0;transform:translateY(3px) scale(0.95,1.8)">~</span><span style="display:inline-block;-webkit-text-stroke:0;transform:translateY(3px) scale(0.95,1.8)">~</span><span style="display:inline-block;-webkit-text-stroke:0;transform:translateY(3px) scale(0.95,1.8)">~</span>...<span style="display:inline-block;-webkit-text-stroke:0;transform:translateY(3px) scale(0.95,1.8)">~</span><span style="display:inline-block;-webkit-text-stroke:0;transform:translateY(3px) scale(0.95,1.8)">~</span>|</div>
<div class="abs" style="left:675.1px;top:673.4px;width:1px;height:72px;background:#dee2e6"></div>
<div class="t" style="left:684.4px;top:673.90px;font-size:18px;line-height:27px;color:#2a64e6;font-weight:normal;font-family:'Liberation Mono',monospace;letter-spacing:-1.7px;-webkit-text-stroke:0.55px #2a64e6">1I</div>
<div class="t" style="left:684.4px;top:697.90px;font-size:18px;line-height:27px;color:#2a64e6;font-weight:normal;font-family:'Liberation Mono',monospace;letter-spacing:-1.7px;-webkit-text-stroke:0.3px #2a64e6">T</div>
<div class="t" style="left:684.4px;top:721.80px;font-size:18px;line-height:27px;color:#2a64e6;font-weight:normal;font-family:'Liberation Mono',monospace;letter-spacing:-1.7px;-webkit-text-stroke:0.3px #2a64e6">J</div>
<div class="abs" style="left:714.9px;top:673.4px;width:1px;height:72px;background:#dee2e6"></div>
<div class="t" style="left:724.2px;top:673.90px;font-size:18px;line-height:27px;color:#2f7a47;font-weight:normal;font-family:'Liberation Mono',monospace;letter-spacing:-1.7px;-webkit-text-stroke:0.55px #2f7a47">3=</div>
<div class="t" style="left:724.2px;top:697.90px;font-size:18px;line-height:27px;color:#2f7a47;font-weight:normal;font-family:'Liberation Mono',monospace;letter-spacing:-1.7px;-webkit-text-stroke:0.3px #2f7a47">TCC</div>
<div class="t" style="left:724.2px;top:721.80px;font-size:18px;line-height:27px;color:#2f7a47;font-weight:normal;font-family:'Liberation Mono',monospace;letter-spacing:-1.7px;-webkit-text-stroke:0.3px #2f7a47">&e<span style="display:inline-block;-webkit-text-stroke:0;transform:translateY(3px) scale(0.95,1.8)">~</span></div>
<div class="abs" style="left:764.0px;top:673.4px;width:1px;height:72px;background:#dee2e6"></div>
<div class="t" style="left:773.3px;top:673.90px;font-size:18px;line-height:27px;color:#f2bc3d;font-weight:normal;font-family:'Liberation Mono',monospace;letter-spacing:-1.7px;-webkit-text-stroke:0.55px #f2bc3d">1X</div>
<div class="t" style="left:773.3px;top:697.90px;font-size:18px;line-height:27px;color:#f2bc3d;font-weight:normal;font-family:'Liberation Mono',monospace;letter-spacing:-1.7px;-webkit-text-stroke:0.3px #f2bc3d">G</div>
<div class="t" style="left:773.3px;top:721.80px;font-size:18px;line-height:27px;color:#f2bc3d;font-weight:normal;font-family:'Liberation Mono',monospace;letter-spacing:-1.7px;-webkit-text-stroke:0.3px #f2bc3d"><span style="display:inline-block;-webkit-text-stroke:0;transform:translateY(3px) scale(0.95,1.8)">~</span></div>
<div class="abs" style="left:803.7px;top:673.4px;width:1px;height:72px;background:#dee2e6"></div>
<div class="t" style="left:112.5px;top:787.08px;font-size:16.8px;line-height:25px;color:#212529;font-weight:normal;font-family:'Liberation Sans',sans-serif;">chr20</div>
<div class="t" style="left:182px;top:787.08px;font-size:16.8px;line-height:25px;color:#212529;font-weight:normal;font-family:'Liberation Sans',sans-serif;">60,001</div>
<div class="t" style="left:250.5px;top:787.08px;font-size:16.8px;line-height:25px;color:#212529;font-weight:normal;font-family:'Liberation Sans',sans-serif;">60</div>
<div class="t" style="left:313px;top:787.08px;font-size:16.8px;line-height:25px;color:#212529;font-weight:normal;font-family:'Liberation Sans',sans-serif;letter-spacing:0.3px">2064</div>
<svg style="left:357.5px;top:790.6px" width="16" height="16" viewBox="0 0 16 16"><circle cx="8" cy="8" r="7.3" stroke="#2a64e6" stroke-width="1.05" fill="none"/><path d="M6 6.2C6 5 6.9 4.3 8 4.3C9.1 4.3 10 5 10 6C10 7.4 8.1 7.5 8.1 9.2" stroke="#2a64e6" stroke-width="1.2" fill="none" stroke-linecap="round"/><circle cx="8.1" cy="11.3" r="0.75" fill="#2a64e6"/></svg>
<div class="t" style="right:383.0px;top:763.96px;font-size:16px;line-height:24px;color:#212529;font-weight:normal;font-family:'Liberation Sans',sans-serif;text-align:right;letter-spacing:-0.5px">CIGAR:</div>
<div class="t" style="right:382.5px;top:787.96px;font-size:16px;line-height:24px;color:#212529;font-weight:normal;font-family:'Liberation Sans',sans-serif;text-align:right;letter-spacing:0px">Seq:</div>
<div class="t" style="right:382.2px;top:811.86px;font-size:16px;line-height:24px;color:#212529;font-weight:normal;font-family:'Liberation Sans',sans-serif;text-align:right;letter-spacing:0.3px">Quality:</div>
<svg style="left:456px;top:767.0px" width="14" height="16" viewBox="0 0 14 16"><path d="M4 2.2H2.6A1.6 1.6 0 0 0 1 3.8V13.9A1.6 1.6 0 0 0 2.6 15.5H11.4A1.6 1.6 0 0 0 13 13.9V3.8A1.6 1.6 0 0 0 11.4 2.2H10" stroke="#2a64e6" stroke-width="1.2" fill="none"/><rect x="4.5" y="0.8" width="5" height="2.8" rx="1" stroke="#2a64e6" stroke-width="1.1" fill="none"/></svg>
<svg style="left:456px;top:791.0px" width="14" height="16" viewBox="0 0 14 16"><path d="M4 2.2H2.6A1.6 1.6 0 0 0 1 3.8V13.9A1.6 1.6 0 0 0 2.6 15.5H11.4A1.6 1.6 0 0 0 13 13.9V3.8A1.6 1.6 0 0 0 11.4 2.2H10" stroke="#2a64e6" stroke-width="1.2" fill="none"/><rect x="4.5" y="0.8" width="5" height="2.8" rx="1" stroke="#2a64e6" stroke-width="1.1" fill="none"/></svg>
<svg style="left:456px;top:814.9px" width="14" height="16" viewBox="0 0 14 16"><path d="M4 2.2H2.6A1.6 1.6 0 0 0 1 3.8V13.9A1.6 1.6 0 0 0 2.6 15.5H11.4A1.6 1.6 0 0 0 13 13.9V3.8A1.6 1.6 0 0 0 11.4 2.2H10" stroke="#2a64e6" stroke-width="1.2" fill="none"/><rect x="4.5" y="0.8" width="5" height="2.8" rx="1" stroke="#2a64e6" stroke-width="1.1" fill="none"/></svg>
<div class="t" style="left:475px;top:763.50px;font-size:18px;line-height:27px;color:#bfbfbf;font-weight:normal;font-family:'Liberation Mono',monospace;letter-spacing:-1.7px;-webkit-text-stroke:0.25px #bfbfbf">12,044S</div>
<div class="t" style="left:475px;top:787.50px;font-size:18px;line-height:27px;color:#bfbfbf;font-weight:normal;font-family:'Liberation Mono',monospace;letter-spacing:-1.7px;-webkit-text-stroke:0.25px #bfbfbf">CAA...AAT</div>
<div class="abs" style="left:569.8px;top:763.0px;width:1px;height:72px;background:#dee2e6"></div>
<div class="t" style="left:579.1px;top:763.50px;font-size:18px;line-height:27px;color:#2f7a47;font-weight:normal;font-family:'Liberation Mono',monospace;letter-spacing:-1.7px;-webkit-text-stroke:0.55px #2f7a47">592=</div>
<div class="t" style="left:579.1px;top:787.50px;font-size:18px;line-height:27px;color:#2f7a47;font-weight:normal;font-family:'Liberation Mono',monospace;letter-spacing:-1.7px;-webkit-text-stroke:0.3px #2f7a47">TGT...ACT</div>
<div class="t" style="left:579.1px;top:811.40px;font-size:18px;line-height:27px;color:#2f7a47;font-weight:normal;font-family:'Liberation Mono',monospace;letter-spacing:-1.7px;-webkit-text-stroke:0.3px #2f7a47"><span style="display:inline-block;-webkit-text-stroke:0;transform:translateY(3px) scale(0.95,1.8)">~</span><span style="display:inline-block;-webkit-text-stroke:0;transform:translateY(3px) scale(0.95,1.8)">~</span><span style="display:inline-block;-webkit-text-stroke:0;transform:translateY(3px) scale(0.95,1.8)">~</span>...<span style="display:inline-block;-webkit-text-stroke:0;transform:translateY(3px) scale(0.95,1.8)">~</span><span style="display:inline-block;-webkit-text-stroke:0;transform:translateY(3px) scale(0.95,1.8)">~</span><span style="display:inline-block;-webkit-text-stroke:0;transform:translateY(3px) scale(0.95,1.8)">~</span></div>
<div class="abs" style="left:675.1px;top:763.0px;width:1px;height:72px;background:#dee2e6"></div>
<div class="t" style="left:684.4px;top:763.50px;font-size:18px;line-height:27px;color:#c8323a;font-weight:normal;font-family:'Liberation Mono',monospace;letter-spacing:-1.7px;-webkit-text-stroke:0.55px #c8323a">1D</div>
<div class="t" style="left:684.4px;top:787.50px;font-size:18px;line-height:27px;color:#c8323a;font-weight:normal;font-family:'Liberation Mono',monospace;letter-spacing:-1.7px;-webkit-text-stroke:0.3px #c8323a">&ndash;</div>
<div class="abs" style="left:714.9px;top:763.0px;width:1px;height:72px;background:#dee2e6"></div>
<div class="t" style="left:724.2px;top:763.50px;font-size:18px;line-height:27px;color:#2f7a47;font-weight:normal;font-family:'Liberation Mono',monospace;letter-spacing:-1.7px;-webkit-text-stroke:0.55px #2f7a47">946=</div>
<div class="t" style="left:724.2px;top:787.50px;font-size:18px;line-height:27px;color:#2f7a47;font-weight:normal;font-family:'Liberation Mono',monospace;letter-spacing:-1.7px;-webkit-text-stroke:0.3px #2f7a47">CAC...TCC</div>
<div class="t" style="left:724.2px;top:811.40px;font-size:18px;line-height:27px;color:#2f7a47;font-weight:normal;font-family:'Liberation Mono',monospace;letter-spacing:-1.7px;-webkit-text-stroke:0.3px #2f7a47"><span style="display:inline-block;-webkit-text-stroke:0;transform:translateY(3px) scale(0.95,1.8)">~</span><span style="display:inline-block;-webkit-text-stroke:0;transform:translateY(3px) scale(0.95,1.8)">~</span><span style="display:inline-block;-webkit-text-stroke:0;transform:translateY(3px) scale(0.95,1.8)">~</span>...<span style="display:inline-block;-webkit-text-stroke:0;transform:translateY(3px) scale(0.95,1.8)">~</span><span style="display:inline-block;-webkit-text-stroke:0;transform:translateY(3px) scale(0.95,1.8)">~</span><span style="display:inline-block;-webkit-text-stroke:0;transform:translateY(3px) scale(0.95,1.8)">~</span></div>
<div class="abs" style="left:820.2px;top:763.0px;width:1px;height:72px;background:#dee2e6"></div>
<div class="abs" style="left:809px;top:307px;width:20px;height:500px;background:#fff"></div>
<div class="abs" style="left:528px;top:282px;width:160px;height:28px;background:#1a1a1a;border-radius:5px"></div>
<svg style="left:601px;top:310px" width="13" height="6" viewBox="0 0 13 6"><path d="M0 0H13L6.5 6Z" fill="#1a1a1a"/></svg>
<div class="t" style="left:536px;top:285.94px;font-size:14.6px;line-height:22px;color:#fff;font-weight:normal;font-family:'Liberation Sans',sans-serif;-webkit-text-stroke:0.3px #fff">1,539 matching bases</div>
</div></body></html>
